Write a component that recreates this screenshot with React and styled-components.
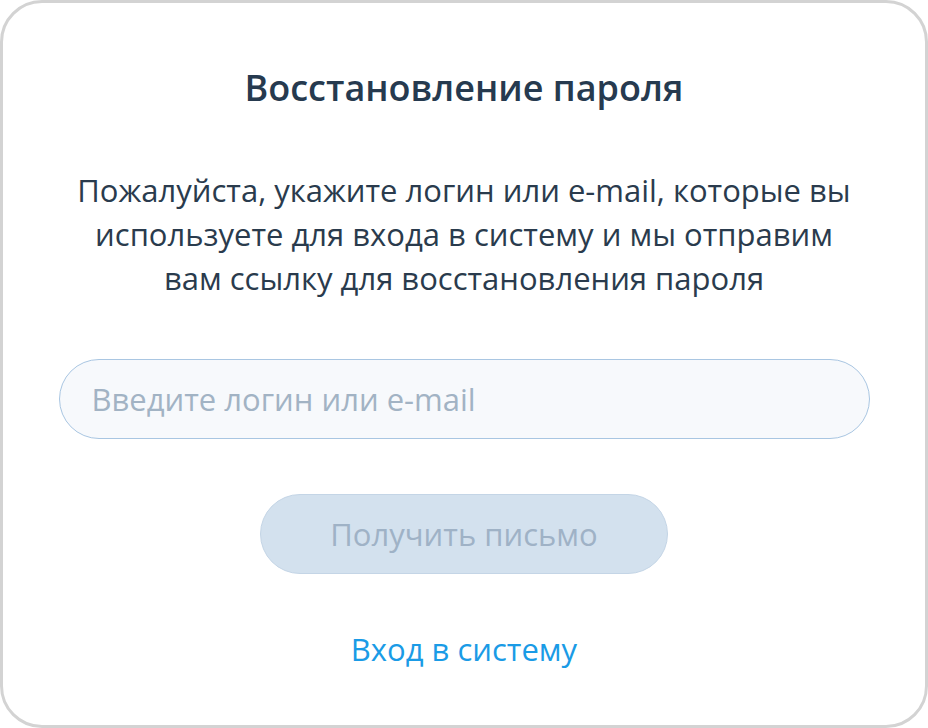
import React, { useState } from "react";
import styled, { createGlobalStyle } from "styled-components";

const GlobalStyle = createGlobalStyle`
  html, body {
    margin: 0;
    padding: 0;
    background: #ffffff;
  }
  * {
    box-sizing: border-box;
  }
`;

const Card = styled.div`
  width: 928px;
  height: 728px;
  border: 3px solid #d3d3d3;
  border-radius: 42px;
  background: #ffffff;
  font-family: "Open Sans", "Noto Sans", sans-serif;
  display: flex;
  flex-direction: column;
  align-items: center;
  padding: 62px 57px 0;
`;

const Title = styled.h1`
  margin: 0;
  font-size: 36px;
  font-weight: 600;
  line-height: 46px;
  color: #263a4f;
`;

const Text = styled.p`
  margin: 57px 0 0;
  font-size: 31px;
  line-height: 44px;
  text-align: center;
  color: #2a3b4d;
  max-width: 790px;
`;

const Input = styled.input`
  margin-top: 59px;
  width: 811px;
  height: 80px;
  border: 1.5px solid #a9c6e2;
  border-radius: 40px;
  background: #f7f9fc;
  padding: 0 32px;
  font-family: inherit;
  font-size: 31px;
  color: #2a3b4d;
  outline: none;

  &::placeholder {
    color: #a2b3c4;
  }
`;

const Button = styled.button`
  margin-top: 55px;
  width: 408px;
  height: 80px;
  border: 1.5px solid #c4d5e6;
  border-radius: 40px;
  background: ${(p) => (p.disabled ? "#d3e1ee" : "#1a9be6")};
  color: ${(p) => (p.disabled ? "#9fb2c6" : "#ffffff")};
  font-family: inherit;
  font-size: 31px;
  cursor: pointer;
`;

const Link = styled.a`
  margin-top: 54px;
  font-size: 31px;
  color: #1a9be6;
  text-decoration: none;
  cursor: pointer;
`;

function App() {
  const [login, setLogin] = useState("");

  return (
    <>
      <GlobalStyle />
      <Card>
        <Title>Восстановление пароля</Title>
        <Text>
          Пожалуйста, укажите логин или e-mail, которые вы используете для
          входа в систему и мы отправим вам ссылку для восстановления пароля
        </Text>
        <Input
          value={login}
          onChange={(e) => setLogin(e.target.value)}
          placeholder="Введите логин или e-mail"
        />
        <Button disabled={login === ""}>Получить письмо</Button>
        <Link>Вход в систему</Link>
      </Card>
    </>
  );
}

export default App;
